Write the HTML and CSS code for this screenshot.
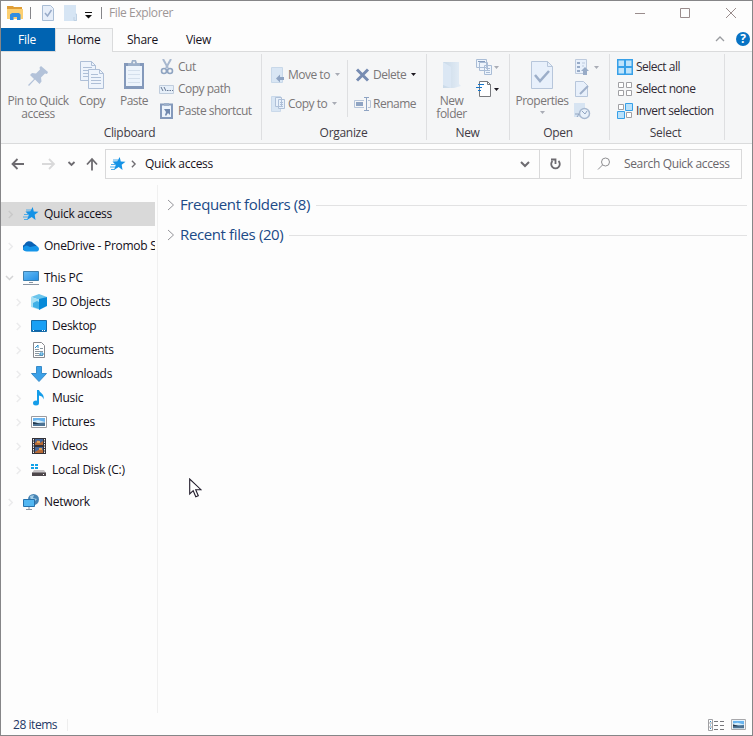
FILE: index.html
```html
<!DOCTYPE html>
<html lang="en">
<head>
<meta charset="utf-8">
<title>File Explorer</title>
<link rel="stylesheet" href="styles.css">
</head>
<body>
<svg class="defs" width="0" height="0">
  <defs>
    <linearGradient id="sky" x1="0" y1="0" x2="1" y2="1"><stop offset="0" stop-color="#68bdf5"/><stop offset="1" stop-color="#218ee5"/></linearGradient>
    <linearGradient id="fade" x1="0" y1="0" x2="1" y2="0"><stop offset="0" stop-color="#c9d9e8"/><stop offset="1" stop-color="#e4edf6"/></linearGradient>
    <symbol id="star" viewBox="0 0 16 16"><path d="M9.700 1 10.800 5.500 15.500 5.700 11.700 8.700 12.500 14 8.700 11 4 14 5.700 9 2.500 5.500 7.300 5.300Z" fill="#1593e6"/><path d="M1 8.500h5M0 11h5M1 13.500h4M3 4h5" stroke="#4eabe8" fill="none"/></symbol>
    <symbol id="chev" viewBox="0 0 8 10"><path d="M2 1l4 4-4 4" fill="none" stroke="currentColor" stroke-width="1.700"/></symbol>
    <symbol id="caret" viewBox="0 0 5 3"><path d="M0 0h5L2.500 3Z" fill="currentColor"/></symbol>
    <symbol id="photo" viewBox="0 0 16 12"><path d="M.5.500h15v11H.500Z" fill="#fff" stroke="#9b9b9f"/><path d="M2 2h12v8H2Z" fill="#69b4ef"/><path d="M2 5l5-1 7 2v1H2Z" fill="#d6edfa"/><path d="M2 6l5 1 7-.5V10H2Z" fill="#4d7394"/><path d="M2 6l4 1 3 1H2Z" fill="#25384c"/></symbol>
  </defs>
</svg>
<div class="window">
  <header class="titlebar">
    <svg class="app-icon" width="16" height="14" viewBox="0 0 16 14"><path d="M0 0h6l1 1h8v3H0Z" fill="#df9d35"/><path d="M0 3h16v10H0Z" fill="#fccf70"/><path d="M3 14V8.500L5 7h7l1.500 1.500V14H10v-3H6.500v3Z" fill="#318ee0"/></svg>
    <i class="bar"></i>
    <svg class="qa-check" width="12" height="16" viewBox="0 0 12 16"><path d="M.5.500h8l3 3v12H.500Z" fill="#e6eef9" stroke="#a9bdd5"/><path d="M3 8l2.500 3L9.500 5" fill="none" stroke="#98abc9" stroke-width="1.500"/></svg>
    <svg class="qa-folder" width="13" height="16" viewBox="0 0 13 16"><path d="M0 0h12v9h1v7H0Z" fill="#d6e5f4"/><path d="M11.500 9h1v6.500H10V12" fill="none" stroke="#bfd1e3"/></svg>
    <svg class="qa-menu" width="8" height="7" viewBox="0 0 8 7"><path d="M0 0h7v1H0ZM0 3h7L3.500 6.500Z" fill="#111"/></svg>
    <i class="bar"></i>
    <span class="title">File Explorer</span>
    <svg class="controls" width="102" height="12" viewBox="0 0 102 12" fill="none" stroke="#998c8c"><path d="M0 6.500h10M45.500 1.500h9v9h-9ZM91 1l10 10M101 1 91 11"/></svg>
  </header>

  <nav class="tabs">
    <a class="tab file">File</a><a class="tab home">Home</a><a class="tab share">Share</a><a class="tab view">View</a>
    <svg class="collapse" width="10" height="6" viewBox="0 0 10 6"><path d="M1 5l4-4 4 4" fill="none" stroke="#9a9ca0" stroke-width="1.300"/></svg>
    <span class="help">?</span>
  </nav>

  <section class="ribbon">
    <div class="group clipboard">
      <div class="tools">
        <div class="big pin"><svg width="22" height="30" viewBox="0 0 22 30"><path d="M14 6l7 6-1 2-2-.5-4 4 .5 4-2 2.500-4.500-4.500L2 26l-1-1 6-6-4-4 2-2 4 .5 4-4-.5-2Z" fill="#b3c2d9"/></svg><span>Pin to Quick<br>access</span></div>
        <div class="big copy"><svg width="26" height="30" viewBox="0 0 26 30" stroke="#aebfd7" fill="#eef4fc"><path d="M1.500 1.500h11l4 4v15h-15Z"/><path d="M12.500 1.500v4h4M4 7.500h9M4 10.500h9M4 13.500h9M4 16.500h9" fill="none"/><path d="M9.500 9.500h11l4 4v15h-15Z"/><path d="M20.500 9.500v4h4M12 14.500h7M12 17.500h10M12 20.500h10M12 23.500h10" fill="none"/></svg><span>Copy</span></div>
        <div class="big paste"><svg width="22" height="30" viewBox="0 0 22 30"><path d="M1 3h20v26H1Z" fill="#8499bb"/><path d="M3 6h16v20H3Z" fill="#edf4fc"/><path d="M5 10.500h12M5 14.500h12M5 18.500h12M5 22.500h12" stroke="#d4dfec"/><path d="M5 6V3h3l1-3h4l1 3h3v3Z" fill="#9db0ca"/><circle cx="11" cy="2.500" r="1" fill="#f5f6f7"/></svg><span>Paste</span></div>
        <div class="stack">
          <div class="row"><svg width="16" height="16" viewBox="0 0 16 16" fill="none"><path d="M4 0l5 9M12 0 7 9" stroke="#a8b8cf" stroke-width="2"/><circle cx="5" cy="12" r="2.500" stroke="#8fa4c1" stroke-width="1.600"/><circle cx="11" cy="12" r="2.500" stroke="#8fa4c1" stroke-width="1.600"/></svg><span>Cut</span></div>
          <div class="row"><svg width="16" height="16" viewBox="0 0 16 16"><path d="M.5 4.500h14v8H.500Z" fill="#e6eff9" stroke="#c0cddd"/><path d="M2 6l2 4M5 6l2 4M8 9.500h1.500M10.500 9.500H12M13 9.500h1" stroke="#667793"/></svg><span>Copy path</span></div>
          <div class="row"><svg width="16" height="16" viewBox="0 0 16 16"><path d="M2 1.500h11V15H2Z" fill="#edf4fc" stroke="#8499bb" stroke-width="2"/><path d="M5 0h5v3H5Z" fill="#9db0ca"/><path d="M5 6h6v6L9 10l-2 3-1-1 1-3Z" fill="#7189af"/></svg><span>Paste shortcut</span></div>
        </div>
      </div>
      <div class="caption">Clipboard</div>
    </div>
    <div class="group organize">
      <div class="tools">
        <div class="pair first">
          <div class="row"><svg width="14" height="16" viewBox="0 0 14 16"><path d="M.5.500h11v15H.500Z" fill="#d9e6f4" stroke="#c8d8e9"/><path d="M13 10v3H9v2.500l-4-4 4-4V10Z" fill="#8fa4c3"/></svg><span>Move to</span><svg class="caret pale" width="5" height="3"><use href="#caret"/></svg></div>
          <div class="row"><svg width="14" height="16" viewBox="0 0 14 16" stroke="#afc0d8" fill="#e9f1fb"><path d="M.5.500h9v15h-9Z" fill="#d9e6f4" stroke="#cad9ea"/><path d="M4.500 1.500h6v9h-6ZM7.500 3.500h6v9h-6ZM9 6.500h3M9 8.500h3M9 10.500h3"/></svg><span>Copy to</span><svg class="caret pale" width="5" height="3"><use href="#caret"/></svg></div>
        </div>
        <div class="pair second">
          <div class="row"><svg width="14" height="14" viewBox="0 0 14 14"><path d="M1.500 1.500l11 11M12.500 1.500l-11 11" stroke="#778cb2" stroke-width="3"/></svg><span>Delete</span><svg class="caret" width="5" height="3"><use href="#caret"/></svg></div>
          <div class="row"><svg width="17" height="16" viewBox="0 0 17 16" fill="none" stroke="#8fa4c3"><path d="M10 4.500H.500v7H10M14 4.500h2.500v7H14" stroke="#b6c5da"/><path d="M2 6h7v4H2Z" fill="#8fa4c3" stroke="none"/><path d="M12.500 1.500v13M10 1.500h5M10 14.500h5"/></svg><span>Rename</span></div>
        </div>
      </div>
      <div class="caption">Organize</div>
    </div>
    <div class="group new">
      <div class="tools">
        <div class="big folder"><svg width="20" height="30" viewBox="0 0 20 30"><path d="M1 2h16v22l2 2-7 2H1Z" fill="url(#fade)"/><path d="M1 2l8 5v21l-8-3Z" fill="#dbe7f4"/></svg><span>New<br>folder</span></div>
        <div class="stack">
          <div class="row"><svg width="18" height="18" viewBox="0 0 18 18" stroke="#aabdd6" fill="#edf4fc"><path d="M1.500 1.500h10v8h-10ZM4.500 4.500h8v8h-8ZM9.500 7.500h7v9h-7ZM11 10.500h4M11 12.500h4M11 14.500h4"/><path d="M3 3.500h7" stroke="#839bbd"/></svg><svg class="caret pale" width="5" height="3"><use href="#caret"/></svg></div>
          <div class="row"><svg width="18" height="18" viewBox="0 0 18 18"><path d="M4.500 1.500h8l3 3v12h-11Z" fill="#fff" stroke="#77797d"/><path d="M12.500 1.500v3h3" fill="none" stroke="#77797d"/><path d="M3 4.500h6M1 7.500h6M3 10.500h3" stroke="#1476cc"/></svg><svg class="caret" width="5" height="3"><use href="#caret"/></svg></div>
        </div>
      </div>
      <div class="caption">New</div>
    </div>
    <div class="group open">
      <div class="tools">
        <div class="big props"><svg width="22" height="30" viewBox="0 0 22 30"><path d="M.5 1.500h16l5 5v22H.500Z" fill="#e8f0fb" stroke="#b7c6db"/><path d="M16.500 1.500v5h5" fill="none" stroke="#b7c6db"/><path d="M4 15l5 6 9-10" fill="none" stroke="#9caec9" stroke-width="2.500"/></svg><span>Properties</span><svg class="caret pale" width="5" height="3"><use href="#caret"/></svg></div>
        <div class="stack">
          <div class="row"><svg width="16" height="16" viewBox="0 0 16 16"><path d="M1.500.500h11v14h-11Z" fill="#e8f0fb" stroke="#bdcadd"/><path d="M3 3h3v2H3ZM3 7h3v2H3ZM3 11h3v2H3ZM11 8l4 4h-2v4H9v-4H7Z" fill="#98abc7"/><path d="M8 4h3M8 7h2" stroke="#bdcadd"/></svg><svg class="caret pale" width="5" height="3"><use href="#caret"/></svg></div>
          <div class="row"><svg width="16" height="16" viewBox="0 0 16 16"><path d="M1.500.500h8l4 4v11h-12Z" fill="#e8f0fb" stroke="#b7c6db"/><path d="M14 5 6 13" stroke="#9fb0ca" stroke-width="2"/></svg></div>
          <div class="row"><svg width="17" height="18" viewBox="0 0 17 18"><path d="M0 1h11v14H0Z" fill="#d7e4f2"/><circle cx="10.500" cy="11.500" r="5" fill="#e9f1fa" stroke="#a8b9d0" stroke-width="1.500"/><path d="M8 9l3 3 2-3M1 12h4l-2 3" fill="none" stroke="#90a4c0"/></svg></div>
        </div>
      </div>
      <div class="caption">Open</div>
    </div>
    <div class="group select">
      <div class="tools">
        <div class="stack">
          <div class="row"><svg width="16" height="16" viewBox="0 0 16 16"><path d="M0 0h16v16H0Z" fill="#37a0e8"/><path d="M1.500 1.500H7V7H1.500ZM9 1.500h5.500V7H9ZM1.500 9H7v5.500H1.500ZM9 9h5.500v5.500H9Z" fill="#c0e4fb"/></svg><span>Select all</span></div>
          <div class="row"><svg width="16" height="16" viewBox="0 0 16 16" fill="#fff" stroke="#a0a0a4"><path d="M1.500 1.500h5v5h-5ZM9.500 1.500h5v5h-5ZM1.500 9.500h5v5h-5ZM9.500 9.500h5v5h-5Z"/></svg><span>Select none</span></div>
          <div class="row"><svg width="16" height="16" viewBox="0 0 16 16" fill="#fff" stroke="#a0a0a4"><path d="M1.500 1.500h5v5h-5ZM9.500 9.500h5v5h-5Z"/><path d="M8.500.500h7v7h-7ZM.500 8.500h7v7h-7Z" fill="#b9e1fb" stroke="#37a0e8"/></svg><span>Invert selection</span></div>
        </div>
      </div>
      <div class="caption">Select</div>
    </div>
  </section>

  <section class="navrow">
    <svg class="arrows" width="98" height="40" viewBox="0 0 98 40" fill="none" stroke="#6d6b70" stroke-width="1.800"><path d="M24 20H12.500M17.500 15l-5 5 5 5"/><path d="M42 20h12M49 15l5 5-5 5" stroke="#d9d9da"/><path d="M68.500 18l3 3 3-3"/><path d="M92 26.500V15M87 20.500l5-5.500 5 5.500"/></svg>
    <div class="address">
      <svg class="star" width="16" height="16"><use href="#star"/></svg>
      <svg class="crumb" width="7" height="8"><use href="#chev"/></svg>
      <span>Quick access</span>
      <svg class="drop" width="10" height="7" viewBox="0 0 10 7"><path d="M1 1l4 4 4-4" fill="none" stroke="#6d6b70" stroke-width="2"/></svg>
      <div class="refresh"><svg width="11" height="12" viewBox="0 0 11 12"><path d="M8.500 3A4.300 4.300 0 1 1 2.500 3M1 1.500h4.500V6" fill="none" stroke="#6d6b70" stroke-width="1.800"/></svg></div>
    </div>
    <div class="search"><svg width="14" height="14" viewBox="0 0 14 14" fill="none" stroke="#8e8e91"><circle cx="8.500" cy="5" r="4"/><path d="M5.500 8 1 12.500"/></svg><span>Search Quick access</span></div>
  </section>

  <main class="body">
    <aside class="tree">
      <div class="node active"><svg class="twist" width="7" height="9"><use href="#chev"/></svg><svg width="16" height="16"><use href="#star"/></svg><span>Quick access</span></div>
      <div class="node gap"><svg class="twist" width="7" height="9"><use href="#chev"/></svg><svg width="16" height="16" viewBox="0 0 16 16"><path d="M1 12.500a3.500 3.500 0 0 1 .5-6A5 5 0 0 1 10 5l3.500 2.500L15 12Z" fill="#0a62b5"/><path d="M4 13.500C1.500 13.500 0 12 0 10.500S2 7.500 4 7.500L7 9l5-1c2.500-.5 4 1 4 3s-1.500 2.500-3 2.500Z" fill="#1595e9"/></svg><span>OneDrive - Promob S</span></div>
      <div class="node gap"><svg class="twist down" width="9" height="6" viewBox="0 0 9 6"><path d="M1 1l3.500 3.500L8 1" fill="none" stroke="currentColor" stroke-width="1.500"/></svg><svg width="16" height="16" viewBox="0 0 16 16"><path d="M.5 1.500h15v9H.500Z" fill="url(#sky)" stroke="#3d7fae"/><path d="M6 12.500h4M0 14.500h16" stroke="#8995a3"/></svg><span>This PC</span></div>
      <div class="node child"><svg class="twist" width="7" height="9"><use href="#chev"/></svg><svg width="16" height="16" viewBox="0 0 16 16"><path d="M0 3l8-3 8 3-7 3Z" fill="#6cc5ec"/><path d="M0 3l9 3v10l-9-3Z" fill="#a5e0f5"/><path d="M8 5l8-2v9l-8 4Z" fill="#078ad8"/><path d="M2 9l4-2 2 1v7l-6-2Z" fill="#3fb0e6"/></svg><span>3D Objects</span></div>
      <div class="node child"><svg class="twist" width="7" height="9"><use href="#chev"/></svg><svg width="16" height="16" viewBox="0 0 16 16"><path d="M.5 2.500h15v11H.500Z" fill="#18a0f5" stroke="#176ca8"/><path d="M1 12.500h14" stroke="#0a65ac"/><path d="M2 12.500h1M11 12.500h1M13 12.500h1" stroke="#fff"/></svg><span>Desktop</span></div>
      <div class="node child"><svg class="twist" width="7" height="9"><use href="#chev"/></svg><svg width="16" height="16" viewBox="0 0 16 16"><path d="M2.500.500h8l3 3v12h-11Z" fill="#fff" stroke="#88898e"/><path d="M4 7.500h4M4 9.500h8M4 11.500h4M4 13.500h8M9 6.500h3" stroke="#8a969f"/><path d="M4 6l3-3v3M9 11h3v2H9Z" stroke="#258dcc" fill="none"/></svg><span>Documents</span></div>
      <div class="node child"><svg class="twist" width="7" height="9"><use href="#chev"/></svg><svg width="16" height="16" viewBox="0 0 16 16"><path d="M5.500.500h5v7h5L8 15.500.500 7.500h5Z" fill="#3ba1e8" stroke="#378bc9"/></svg><span>Downloads</span></div>
      <div class="node child"><svg class="twist" width="7" height="9"><use href="#chev"/></svg><svg width="16" height="16" viewBox="0 0 16 16"><ellipse cx="5" cy="13" rx="3" ry="2.500" fill="#159de9"/><path d="M6 0h2c.5 3 6 4 4.500 9.500C12 6.500 10 6 8 5.500V13H6Z" fill="#159de9"/></svg><span>Music</span></div>
      <div class="node child"><svg class="twist" width="7" height="9"><use href="#chev"/></svg><svg width="16" height="12"><use href="#photo"/></svg><span>Pictures</span></div>
      <div class="node child"><svg class="twist" width="7" height="9"><use href="#chev"/></svg><svg width="16" height="16" viewBox="0 0 16 16"><path d="M1 0h14v16H1Z" fill="#343238"/><path d="M2.500 1v14M13.500 1v14" stroke="#eee" stroke-dasharray="1.500 1"/><path d="M4 1h8v6H4ZM4 9h8v6H4Z" fill="#45679a"/><path d="M4 5l3-3 2 3 3-2v4H4ZM4 14l5-3 3 1v3H4Z" fill="#b76a35"/><path d="M6 3h3v2H6ZM8 10h3v2H8Z" fill="#e2a154"/></svg><span>Videos</span></div>
      <div class="node child"><svg class="twist" width="7" height="9"><use href="#chev"/></svg><svg width="16" height="16" viewBox="0 0 16 16"><path d="M0 2h3v2H0ZM4 2h3v2H4ZM0 5h3v2H0ZM4 5h3v2H4Z" fill="#11a2e8"/><path d="M3 8h10l2 3H1Z" fill="#c8c5c7"/><path d="M1 10.500h14V14H1Z" fill="#4e474b"/><path d="M12 12.500h1" stroke="#fff"/></svg><span>Local Disk (C:)</span></div>
      <div class="node gap"><svg class="twist" width="7" height="9"><use href="#chev"/></svg><svg width="16" height="16" viewBox="0 0 16 16"><circle cx="10.500" cy="5.500" r="5.500" fill="#4784b4"/><path d="M7 2l4-1-1 3 4 1-3 3-3-1Z" fill="#a1cce6"/><path d="M.5 5.500h11v7H.500Z" fill="#52b7f2" stroke="#2672ad"/><path d="M6 13v2M3 15.500h6" stroke="#8995a3"/></svg><span>Network</span></div>
    </aside>
    <section class="content">
      <div class="section-head"><svg width="8" height="12" viewBox="0 0 8 12"><path d="M1 1l5.500 5L1 11" fill="none" stroke="#949499"/></svg><h2>Frequent folders (8)</h2><i></i></div>
      <div class="section-head"><svg width="8" height="12" viewBox="0 0 8 12"><path d="M1 1l5.500 5L1 11" fill="none" stroke="#949499"/></svg><h2>Recent files (20)</h2><i></i></div>
    </section>
  </main>
  <footer class="status"><span>28 items</span><i></i>
    <svg class="details" width="16" height="12" viewBox="0 0 16 12"><path d="M.5.500h4v11h-4ZM.500 4h4M.500 8h4" fill="#fff" stroke="#a1a1a4"/><path d="M2 2.500h1M2 6h1M2 9.500h1" stroke="#328ac8"/><path d="M6 2.500h4M12 2.500h4M6 6.500h4M12 6.500h4M6 10.500h4M12 10.500h4" stroke="#77777b"/></svg>
    <svg class="thumbs" width="15" height="11"><use href="#photo"/></svg>
  </footer>
</div>
<svg class="cursor" width="13" height="20" viewBox="0 0 13 20"><path d="M.7 1v15l3.500-3.300 2.600 6 2.500-1-2.600-6H12Z" fill="#fff" stroke="#221d2c" stroke-width="1.100"/></svg>
</body>
</html>
```
FILE: styles.css
```css
* { box-sizing: border-box; }
body { margin: 0; background: #fdfdfd; color: #17121c; font: 12px/14px "Open Sans", "Noto Sans", sans-serif; letter-spacing: -.27px; white-space: nowrap; overflow: hidden; }
svg { display: block; flex: none; }
.defs, .cursor { position: absolute; }
.cursor { left: 189px; top: 478px; }
.window { width: 753px; height: 736px; border: 1px solid #868688; display: flex; flex-direction: column; }

.titlebar { height: 27px; display: flex; align-items: center; padding: 0 15px 3px 6px; flex: none; }
.bar { width: 1px; height: 12px; background: #858589; }
.titlebar .app-icon { margin-right: 7px; }
.qa-check { margin-left: 11px; }
.qa-folder { margin-left: 10px; }
.qa-menu { margin: 4px 8px 0 8px; }
.title { margin-left: 7px; color: #9d9696; letter-spacing: -.4px; }
.controls { margin-left: auto; }

.tabs { height: 24px; flex: none; display: flex; align-items: stretch; border-bottom: 1px solid #dadbdc; }
.tab { text-align: center; line-height: 24px; }
.file { width: 54px; height: 23px; padding-right: 2px; background: #0063b1; color: #fff; }
.home { width: 58px; height: 24px; border: 1px solid #dadbdc; border-bottom: 0; background: #f5f6f7; line-height: 22px; }
.share { width: 59px; }
.view { width: 53px; }
.collapse { margin: 8px 11px 0 auto; }
.help { width: 14px; height: 14px; margin: 4px 2px 0 0; border-radius: 50%; background: #0873c4; color: #fff; text-align: center; font-weight: 700; }

.ribbon { height: 92px; flex: none; display: flex; background: #f5f6f7; border-bottom: 1px solid #dadbdc; color: #7a7778; letter-spacing: -.5px; }
.group { margin: 2px 0 3px; border-right: 1px solid #dedfe1; display: flex; flex-direction: column; }
.clipboard { width: 261px; }
.organize { width: 165px; }
.new { width: 83px; }
.open { width: 100px; }
.select { width: 115px; color: #302a35; }
.tools { height: 73px; display: flex; }
.caption { text-align: center; color: #413b45; line-height: 15px; padding-right: 3px; letter-spacing: -.3px; }
.organize .caption, .new .caption { padding-right: 1px; }
.big { display: flex; flex-direction: column; align-items: center; text-align: center; line-height: 13px; padding-top: 6px; }
.big span { margin-top: 4px; }
.pin { width: 74px; }
.copy { width: 34px; }
.paste { width: 50px; }
.stack { display: flex; flex-direction: column; padding-top: 2px; }
.row { height: 22px; display: flex; align-items: center; }
.clipboard .row span { margin-left: 3px; }
.caret { color: #1c1820; }
.pale { color: #a9acb5; }
.pair { padding-top: 6px; }
.pair .row { height: 29px; }
.pair .caret { margin-left: 5px; }
.first { width: 86px; height: 57px; margin-top: 6px; padding: 0 0 0 9px; border-right: 1px solid #dedfe1; }
.first .row span { margin-left: 3px; }
.second { padding: 6px 0 0 6px; }
.second .row > svg:first-child { width: 17px; }
.second .row span { margin-left: 2px; }
.folder { width: 46px; padding-left: 3px; }
.new .stack .row { padding-left: 2px; }
.new .stack .caret { margin-left: 1px; }
.props { width: 64px; }
.props .caret { margin-top: 4px; }
.open .stack .caret { margin-left: 4px; }
.select .stack { padding-left: 7px; }
.select .row span { margin-left: 3px; }

.navrow { height: 41px; flex: none; display: flex; align-items: center; padding-bottom: 1px; }
.arrows { margin-left: -1px; }
.address { height: 30px; width: 466px; margin-left: 7px; border: 1px solid #d9d9da; display: flex; align-items: center; }
.address .star { margin-left: 4px; }
.crumb { margin: 0 8px 0 4px; color: #706e73; }
.drop { margin-left: auto; }
.refresh { align-self: stretch; width: 31px; margin-left: 9px; border-left: 1px solid #d9d9da; display: grid; place-items: center; }
.search { height: 30px; width: 159px; margin-left: 12px; border: 1px solid #d9d9da; display: flex; align-items: center; padding-left: 13px; color: #69666b; }
.search span { margin-left: 13px; letter-spacing: -.35px; }

.body { flex: 1; min-height: 0; display: flex; }
.tree { width: 157px; height: 528px; padding: 17px 2px 0 0; border-right: 1px solid #f0f0f0; overflow: hidden; }
.node { height: 24px; display: flex; align-items: center; padding-left: 6px; overflow: hidden; color: #120e18; }
.node.active { background: #d9d9d9; }
.node.gap { margin-top: 8px; }
.node.child { padding-left: 14px; }
.twist { width: 7px; margin-right: 9px; color: #ebebec; }
.active .twist { color: #c9c9c9; }
.twist.down { width: 9px; margin: 0 9px 0 -2px; color: #d4d4d5; }
.node span { margin-left: 5px; }
.content { flex: 1; padding: 5px 5px 0 9px; }
.section-head { height: 30px; display: flex; align-items: center; }
.section-head h2 { margin: -2px 6px 0 5px; font: 400 15px/20px "Open Sans", sans-serif; letter-spacing: -.38px; color: #204a87; }
.section-head i { height: 1px; flex: 1; background: #e2e2e3; }

.status { height: 21px; flex: none; display: flex; align-items: center; padding: 0 6px 0 12px; color: #243866; letter-spacing: -.45px; }
.status i { width: 1px; height: 12px; margin-left: 10px; background: #eee; }
.details { margin-left: auto; }
.thumbs { margin-left: 7px; }
```
